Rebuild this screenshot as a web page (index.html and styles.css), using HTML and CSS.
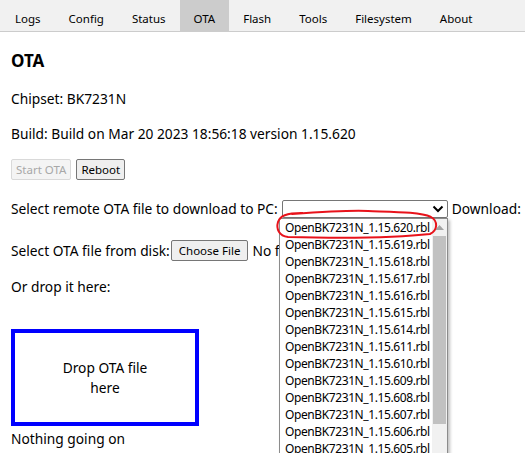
FILE: index.html
```html
<!DOCTYPE html>
<html lang="en">

<head>
    <meta charset="UTF-8">
    <title>OpenBK - OTA</title>
    <link rel="stylesheet" href="styles.css">
</head>

<body>

    <!-- Tab Bar -->
    <div class="tabs">
        <button class="tab">Logs</button>
        <button class="tab">Config</button>
        <button class="tab">Status</button>
        <button class="tab active">OTA</button>
        <button class="tab">Flash</button>
        <button class="tab">Tools</button>
        <button class="tab">Filesystem</button>
        <button class="tab">About</button>
    </div>

    <div class="content">
        <h3 class="title">OTA</h3>
        <p class="row chipset">Chipset: BK7231N</p>
        <p class="row build">Build: Build on Mar 20 2023 18:56:18 version 1.15.620</p>

        <div class="row buttons">
            <button class="btn" disabled>Start OTA</button>
            <button class="btn">Reboot</button>
        </div>

        <div class="row remote">
            <span>Select remote OTA file to download to PC:</span>
            <div class="select-box">
                <svg class="chevron" width="12" height="8" viewBox="0 0 12 8">
                    <path d="M1.5 1.5 L6 6 L10.5 1.5" fill="none" stroke="#000" stroke-width="2"/>
                </svg>
            </div>
            <span>Download:</span>
        </div>

        <div class="row disk">
            <span>Select OTA file from disk:</span>
            <button class="btn file-btn">Choose File</button>
            <span class="no-file">No file chosen</span>
        </div>

        <p class="row drop-label">Or drop it here:</p>

        <div class="dropzone">Drop OTA file<br>here</div>

        <p class="status">Nothing going on</p>
    </div>

    <!-- Open select popup -->
    <div class="popup">
        <ul class="options">
            <li>OpenBK7231N_1.15.620.rbl</li>
            <li>OpenBK7231N_1.15.619.rbl</li>
            <li>OpenBK7231N_1.15.618.rbl</li>
            <li>OpenBK7231N_1.15.617.rbl</li>
            <li>OpenBK7231N_1.15.616.rbl</li>
            <li>OpenBK7231N_1.15.615.rbl</li>
            <li>OpenBK7231N_1.15.614.rbl</li>
            <li>OpenBK7231N_1.15.611.rbl</li>
            <li>OpenBK7231N_1.15.610.rbl</li>
            <li>OpenBK7231N_1.15.609.rbl</li>
            <li>OpenBK7231N_1.15.608.rbl</li>
            <li>OpenBK7231N_1.15.607.rbl</li>
            <li>OpenBK7231N_1.15.606.rbl</li>
            <li>OpenBK7231N_1.15.605.rbl</li>
        </ul>
        <div class="scrollbar">
            <svg class="arrow" width="9" height="5" viewBox="0 0 9 5">
                <path d="M0 5 L4.5 0 L9 5 Z" fill="#a3a3a3"/>
            </svg>
            <div class="thumb"></div>
        </div>
    </div>

    <!-- Hand drawn red mark -->
    <svg class="mark" width="525" height="453" viewBox="0 0 525 453">
        <path d="M292 214 C320 212 348 210 368 211 C395 212 420 212 431 217 C438 221 438 230 430 234 C395 238 330 238 288 237 C279 236 276 229 278 222 C280 216 286 213 302 213" fill="none" stroke="#e8131b" stroke-width="2" stroke-linecap="round"/>
    </svg>

</body>

</html>
```

FILE: styles.css
```css
body {
    font-family: "Noto Sans", Arial, sans-serif;
    font-size: 13.75px;
    color: #000;
    background-color: #fff;
    margin: 0;
    padding: 0;
}

/* tabs */
.tabs {
    display: flex;
    height: 31px;
    background-color: #f1f1f1;
    border-bottom: 1px solid #ccc;
}

.tab {
    font-family: inherit;
    font-size: 11.5px;
    color: #000;
    background: none;
    border: none;
    padding: 5px 14px 0 14px;
    margin: 0;
}

.tab:first-child {
    padding-left: 15px;
}

.tab.active {
    background-color: #ccc;
}

/* page */
.content {
    padding: 0 11px;
}

.title {
    font-size: 17px;
    font-weight: bold;
    line-height: 20px;
    margin: 19px 0 0;
}

.row {
    display: flex;
    align-items: center;
    margin: 0;
    line-height: 20px;
    white-space: nowrap;
}

.chipset {
    margin-top: 18px;
}

.build {
    margin-top: 15px;
}

.buttons {
    margin-top: 15px;
    gap: 5px;
}

.btn {
    font-family: inherit;
    font-size: 11.5px;
    height: 21px;
    padding: 0 4px;
    color: #000;
    background-color: #efefef;
    border: 1px solid #767676;
    border-radius: 2px;
}

.btn:disabled {
    color: #a8a8a8;
    background-color: #f4f4f4;
    border-color: #d9d9d9;
}

.remote {
    margin-top: 19px;
}

.select-box {
    flex-shrink: 0;
    width: 161px;
    height: 16px;
    margin: 0 4px 0 4px;
    border: 1px solid #767676;
    border-radius: 2px;
    display: flex;
    align-items: center;
    justify-content: flex-end;
    padding-right: 3px;
}

.disk {
    margin-top: 21px;
}

.file-btn {
    margin-left: 1px;
    padding: 0 7px;
}

.no-file {
    margin-left: 4px;
}

.drop-label {
    margin-top: 16px;
}

.dropzone {
    width: 180px;
    height: 89px;
    margin-top: 32px;
    border: 4px solid #0000ff;
    display: flex;
    align-items: center;
    justify-content: center;
    text-align: center;
    line-height: 20px;
}

.status {
    margin: 4px 0 0;
    line-height: 18px;
}

/* popup list of the open select */
.popup {
    position: absolute;
    left: 279px;
    top: 218px;
    width: 167px;
    height: 250px;
    display: flex;
    background-color: #fff;
    border: 1px solid #8c8c8c;
    box-shadow: 2px 2px 3px rgba(0, 0, 0, 0.25);
}

.options {
    list-style: none;
    margin: 0;
    padding: 0;
    flex: 1;
    overflow: hidden;
}

.options li {
    height: 17px;
    line-height: 17px;
    padding-left: 5px;
    font-size: 12px;
    letter-spacing: -0.4px;
    white-space: nowrap;
}

.scrollbar {
    width: 15px;
    background-color: #f1f1f1;
    display: flex;
    flex-direction: column;
    align-items: center;
}

.arrow {
    margin-top: 6px;
}

.thumb {
    width: 13px;
    height: 188px;
    margin-top: 6px;
    background-color: #c1c1c1;
}

.mark {
    position: absolute;
    left: 0;
    top: 0;
    pointer-events: none;
}
```
